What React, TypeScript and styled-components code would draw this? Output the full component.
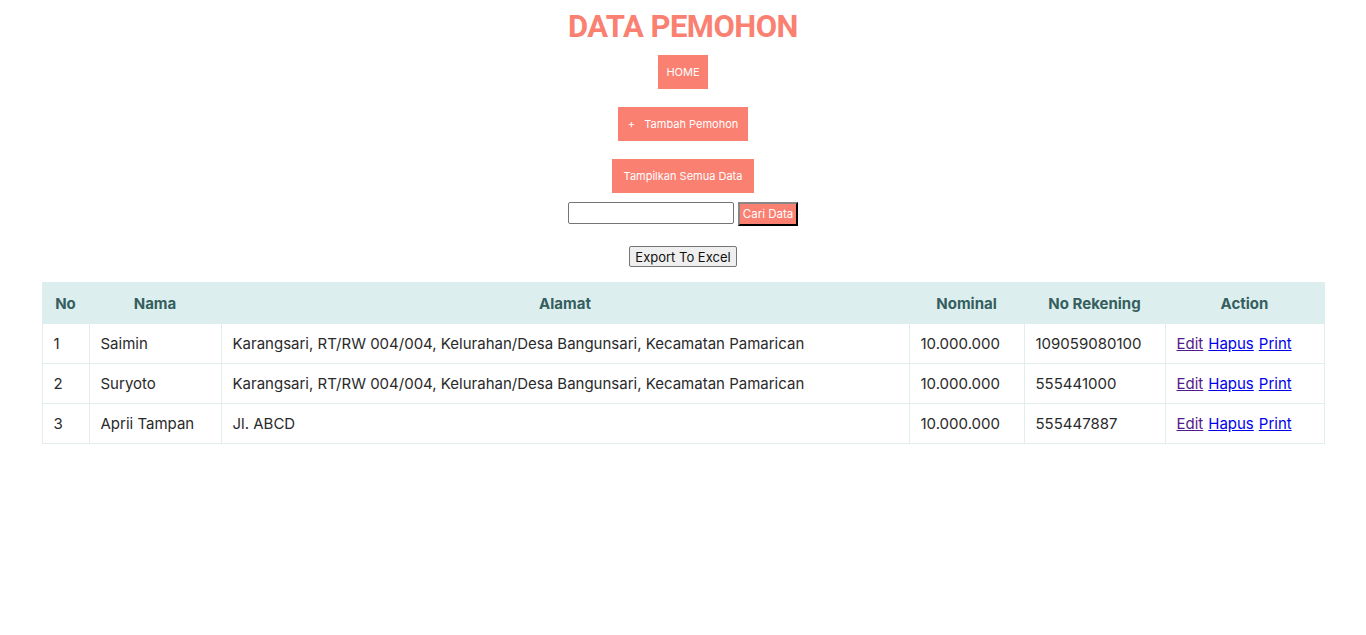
import React from "react";
import styled, { createGlobalStyle } from "styled-components";

const GlobalStyle = createGlobalStyle`
  body {
    margin: 8px;
    background: #ffffff;
    font-family: Inter, "Noto Sans", sans-serif;
    color: #222222;
  }
`;

const Page = styled.div`
  display: flex;
  flex-direction: column;
  align-items: center;
`;

const Title = styled.h1`
  margin: 0 0 10px;
  font-family: Roboto, "Noto Sans", sans-serif;
  font-size: 31px;
  letter-spacing: -0.5px;
  line-height: 37px;
  font-weight: 700;
  color: #fa8072;
`;

const NavButton = styled.button<{ $gap?: number; $padX?: number }>`
  height: 34px;
  padding: 0 ${(p) => p.$padX ?? 10}px;
  margin-bottom: ${(p) => p.$gap ?? 18}px;
  border: none;
  background: #fa8072;
  color: #ffffff;
  font-family: Inter, "Noto Sans", sans-serif;
  font-size: 11px;
  cursor: pointer;
`;

const SearchRow = styled.form`
  display: flex;
  align-items: flex-start;
  gap: 4px;
  margin-bottom: 20px;
`;

const SearchInput = styled.input`
  box-sizing: border-box;
  width: 166px;
  height: 22px;
  border: 1px solid #767676;
  border-radius: 2px;
  padding: 1px 4px;
  font-family: Inter, sans-serif;
  font-size: 13px;
`;

const SearchButton = styled.button`
  box-sizing: border-box;
  width: 60px;
  height: 24px;
  padding: 0;
  background: #fa8072;
  color: #ffffff;
  border: 2px outset #333333;
  font-family: Inter, "Noto Sans", sans-serif;
  font-size: 11.5px;
`;

const ExportButton = styled.button`
  box-sizing: border-box;
  height: 21px;
  padding: 0 5px;
  margin-bottom: 15px;
  background: #efefef;
  border: 1px solid #767676;
  border-radius: 2px;
  color: #111111;
  font-family: Inter, "Noto Sans", sans-serif;
  font-size: 13px;
`;

const Table = styled.table`
  width: 95%;
  border-collapse: collapse;
  table-layout: fixed;
  font-size: 15px;
`;

const HeadCell = styled.th`
  height: 40px;
  padding: 0 10px;
  background: #ddeeee;
  color: #355f5f;
  font-weight: 700;
  text-align: center;
  border: 1px solid #ddeeee;
`;

const Cell = styled.td`
  height: 39px;
  padding: 0 11px;
  border: 1px solid #e2eded;
  color: #2a2a2a;
  white-space: nowrap;
`;

const ActionLink = styled.a<{ $visited?: boolean }>`
  color: ${(p) => (p.$visited ? "#551a8b" : "#0000ee")};
  text-decoration: underline;
  margin-right: 5px;
  &:last-child {
    margin-right: 0;
  }
`;

const rows = [
  { no: 1, nama: "Saimin", alamat: "Karangsari, RT/RW 004/004, Kelurahan/Desa Bangunsari, Kecamatan Pamarican", nominal: "10.000.000", rek: "109059080100" },
  { no: 2, nama: "Suryoto", alamat: "Karangsari, RT/RW 004/004, Kelurahan/Desa Bangunsari, Kecamatan Pamarican", nominal: "10.000.000", rek: "555441000" },
  { no: 3, nama: "Aprii Tampan", alamat: "Jl. ABCD", nominal: "10.000.000", rek: "555447887" },
];

const widths = [47, 132, 688, 115, 141, 159];

export default function App() {
  return (
    <>
      <GlobalStyle />
      <Page>
        <Title>DATA PEMOHON</Title>
        <NavButton $padX={8}>HOME</NavButton>
        <NavButton>+&nbsp;&nbsp;&nbsp;Tambah Pemohon</NavButton>
        <NavButton $gap={9} $padX={12}>Tampilkan Semua Data</NavButton>
        <SearchRow onSubmit={(e) => e.preventDefault()}>
          <SearchInput type="text" />
          <SearchButton type="submit">Cari Data</SearchButton>
        </SearchRow>
        <ExportButton>Export To Excel</ExportButton>
        <Table>
          <colgroup>
            {widths.map((w, i) => (
              <col key={i} width={w} />
            ))}
          </colgroup>
          <thead>
            <tr>
              <HeadCell>No</HeadCell>
              <HeadCell>Nama</HeadCell>
              <HeadCell>Alamat</HeadCell>
              <HeadCell>Nominal</HeadCell>
              <HeadCell>No Rekening</HeadCell>
              <HeadCell>Action</HeadCell>
            </tr>
          </thead>
          <tbody>
            {rows.map((r) => (
              <tr key={r.no}>
                <Cell>{r.no}</Cell>
                <Cell>{r.nama}</Cell>
                <Cell>{r.alamat}</Cell>
                <Cell>{r.nominal}</Cell>
                <Cell>{r.rek}</Cell>
                <Cell>
                  <ActionLink href="#" $visited>Edit</ActionLink>
                  <ActionLink href="#">Hapus</ActionLink>
                  <ActionLink href="#">Print</ActionLink>
                </Cell>
              </tr>
            ))}
          </tbody>
        </Table>
      </Page>
    </>
  );
}
